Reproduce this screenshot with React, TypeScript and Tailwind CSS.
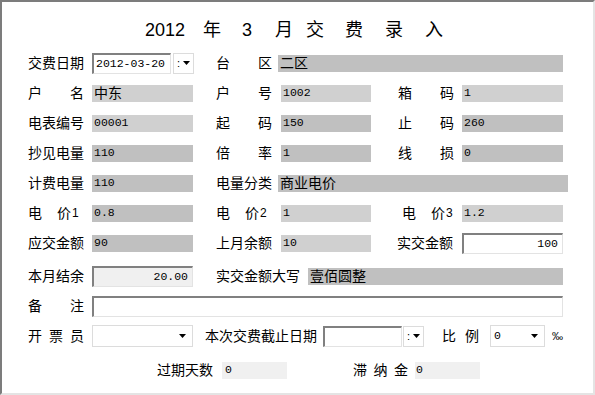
const sunken =
  "border-t-2 border-l-2 border-r border-b border-t-[#808080] border-l-[#808080] border-r-[#e3e3e3] border-b-[#e3e3e3]"
const mono = "font-['Liberation_Mono','Noto_Sans_CJK_SC',monospace] text-[11.5px] leading-none"

function Lbl({ text, className = "" }: { text: string[]; className?: string }) {
  return (
    <div className={`flex justify-between text-[14px] leading-none shrink-0 ${className}`}>
      {text.map((t, i) => (
        <span key={i}>{t}</span>
      ))}
    </div>
  )
}

function Field({
  value,
  dark,
  cjk,
  className = "",
}: {
  value: string
  dark?: boolean
  cjk?: boolean
  className?: string
}) {
  return (
    <div
      className={`h-[17px] shrink-0 flex items-center pl-[2px] ${dark ? "bg-[#c0c0c0]" : "bg-[#d0d0d0]"} ${className}`}
    >
      <span className={cjk ? "text-[14px] leading-none" : mono}>{value}</span>
    </div>
  )
}

function Arrow() {
  return (
    <svg width="7" height="4" viewBox="0 0 7 4">
      <path d="M0 0h7L3.5 4z" fill="#000" />
    </svg>
  )
}

function DropBtn({ className = "" }: { className?: string }) {
  return (
    <div
      className={`w-[21px] h-[21px] shrink-0 border border-[#dcdcdc] bg-white flex items-center justify-center gap-[3px] ${className}`}
    >
      <span className="text-[11px] leading-none">:</span>
      <Arrow />
    </div>
  )
}

function Price({ n, className = "" }: { n: string; className?: string }) {
  return (
    <div className={`flex items-center text-[14px] leading-none shrink-0 ${className}`}>
      <span>电</span>
      <span className="ml-[15px]">价</span>
      <span className="text-[12px] ml-[1px]">{n}</span>
    </div>
  )
}

export default function App() {
  const row = "flex items-center h-[30px] pl-[26px]"
  return (
    <div className="w-[595px] h-[395px] bg-white text-black border-t-2 border-l-2 border-r-2 border-b-2 border-t-[#7c7c7c] border-l-[#7c7c7c] border-r-[#e4e4e4] border-b-[#e4e4e4] font-['Liberation_Sans','Noto_Sans_CJK_SC',sans-serif]">
      {/* title */}
      <div className="h-[46px] pt-[10px] flex items-center pl-[143px] text-[18px] leading-none">
        <span className="w-[58px]">2012</span>
        <span className="w-[39px]">年</span>
        <span className="w-[33px]">3</span>
        <span className="w-[31px]">月</span>
        <span className="w-[39px]">交</span>
        <span className="w-[40px]">费</span>
        <span className="w-[40px]">录</span>
        <span>入</span>
      </div>

      <div className={row}>
        <Lbl text={["交", "费", "日", "期"]} className="w-[56px]" />
        <div className={`ml-[8px] w-[79px] h-[21px] shrink-0 bg-white flex items-center pl-[2px] ${sunken}`}>
          <span className={mono}>2012-03-20</span>
        </div>
        <DropBtn className="ml-[2px]" />
        <Lbl text={["台", "区"]} className="ml-[22px] w-[56px]" />
        <Field value="二区" cjk dark className="ml-[6px] w-[285px]" />
      </div>

      <div className={row}>
        <Lbl text={["户", "名"]} className="w-[56px]" />
        <Field value="中东" cjk className="ml-[8px] w-[101px]" />
        <Lbl text={["户", "号"]} className="ml-[23px] w-[56px]" />
        <Field value="1002" className="ml-[9px] w-[90px]" />
        <Lbl text={["箱", "码"]} className="ml-[27px] w-[56px]" />
        <Field value="1" className="ml-[8px] w-[101px]" />
      </div>

      <div className={row}>
        <Lbl text={["电", "表", "编", "号"]} className="w-[56px]" />
        <Field value="00001" className="ml-[8px] w-[101px]" />
        <Lbl text={["起", "码"]} className="ml-[23px] w-[56px]" />
        <Field value="150" dark className="ml-[9px] w-[90px]" />
        <Lbl text={["止", "码"]} className="ml-[27px] w-[56px]" />
        <Field value="260" dark className="ml-[8px] w-[101px]" />
      </div>

      <div className={row}>
        <Lbl text={["抄", "见", "电", "量"]} className="w-[56px]" />
        <Field value="110" dark className="ml-[8px] w-[101px]" />
        <Lbl text={["倍", "率"]} className="ml-[23px] w-[56px]" />
        <Field value="1" dark className="ml-[9px] w-[90px]" />
        <Lbl text={["线", "损"]} className="ml-[27px] w-[56px]" />
        <Field value="0" dark className="ml-[8px] w-[101px]" />
      </div>

      <div className={row}>
        <Lbl text={["计", "费", "电", "量"]} className="w-[56px]" />
        <Field value="110" dark className="ml-[8px] w-[101px]" />
        <Lbl text={["电", "量", "分", "类"]} className="ml-[23px] w-[56px]" />
        <Field value="商业电价" cjk dark className="ml-[6px] w-[290px]" />
      </div>

      <div className={row}>
        <Price n="1" className="w-[56px]" />
        <Field value="0.8" dark className="ml-[8px] w-[101px]" />
        <Price n="2" className="ml-[23px] w-[56px]" />
        <Field value="1" className="ml-[9px] w-[90px]" />
        <Price n="3" className="ml-[31px] w-[52px]" />
        <Field value="1.2" className="ml-[8px] w-[101px]" />
      </div>

      <div className={row}>
        <Lbl text={["应", "交", "金", "额"]} className="w-[56px]" />
        <Field value="90" dark className="ml-[8px] w-[101px]" />
        <Lbl text={["上", "月", "余", "额"]} className="ml-[23px] w-[56px]" />
        <Field value="10" className="ml-[9px] w-[90px]" />
        <Lbl text={["实", "交", "金", "额"]} className="ml-[26px] w-[56px]" />
        <div className={`ml-[9px] w-[101px] h-[21px] shrink-0 bg-white flex items-center justify-end pr-[4px] ${sunken}`}>
          <span className={mono}>100</span>
        </div>
      </div>

      <div className={`${row} mt-[3px]`}>
        <Lbl text={["本", "月", "结", "余"]} className="w-[56px]" />
        <div className={`ml-[8px] w-[101px] h-[21px] shrink-0 bg-[#f0f0f0] flex items-center justify-end pr-[4px] ${sunken}`}>
          <span className={mono}>20.00</span>
        </div>
        <Lbl text={["实", "交", "金", "额", "大", "写"]} className="ml-[23px] w-[84px]" />
        <Field value="壹佰圆整" cjk dark className="ml-[8px] w-[255px]" />
      </div>

      <div className={row}>
        <Lbl text={["备", "注"]} className="w-[56px]" />
        <div className={`ml-[8px] w-[471px] h-[21px] shrink-0 bg-white ${sunken}`} />
      </div>

      <div className={row}>
        <Lbl text={["开", "票", "员"]} className="w-[56px]" />
        <div className="ml-[8px] w-[101px] h-[22px] shrink-0 bg-white border border-[#dcdcdc] flex items-center justify-end pr-[6px]">
          <Arrow />
        </div>
        <span className="ml-[12px] text-[14px] leading-none shrink-0">本次交费截止日期</span>
        <div className={`ml-[6px] w-[79px] h-[21px] shrink-0 bg-white ${sunken}`} />
        <DropBtn className="ml-[1px]" />
        <Lbl text={["比", "例"]} className="ml-[18px] w-[37px]" />
        <div className="ml-[11px] w-[55px] h-[22px] shrink-0 bg-white border border-[#dcdcdc] flex items-center justify-between pl-[3px] pr-[6px]">
          <span className={mono}>0</span>
          <Arrow />
        </div>
        <span className="ml-[7px] text-[11px] leading-none shrink-0">‰</span>
      </div>

      <div className="flex items-center h-[30px] pl-[155px] mt-[4px]">
        <Lbl text={["过", "期", "天", "数"]} className="w-[56px]" />
        <div className="ml-[9px] w-[65px] h-[17px] shrink-0 bg-[#f0f0f0] flex items-center pl-[3px]">
          <span className={mono}>0</span>
        </div>
        <Lbl text={["滞", "纳", "金"]} className="ml-[66px] w-[55px]" />
        <div className="ml-[7px] w-[65px] h-[17px] shrink-0 bg-[#f0f0f0] flex items-center pl-[1px]">
          <span className={mono}>0</span>
        </div>
      </div>
    </div>
  )
}
